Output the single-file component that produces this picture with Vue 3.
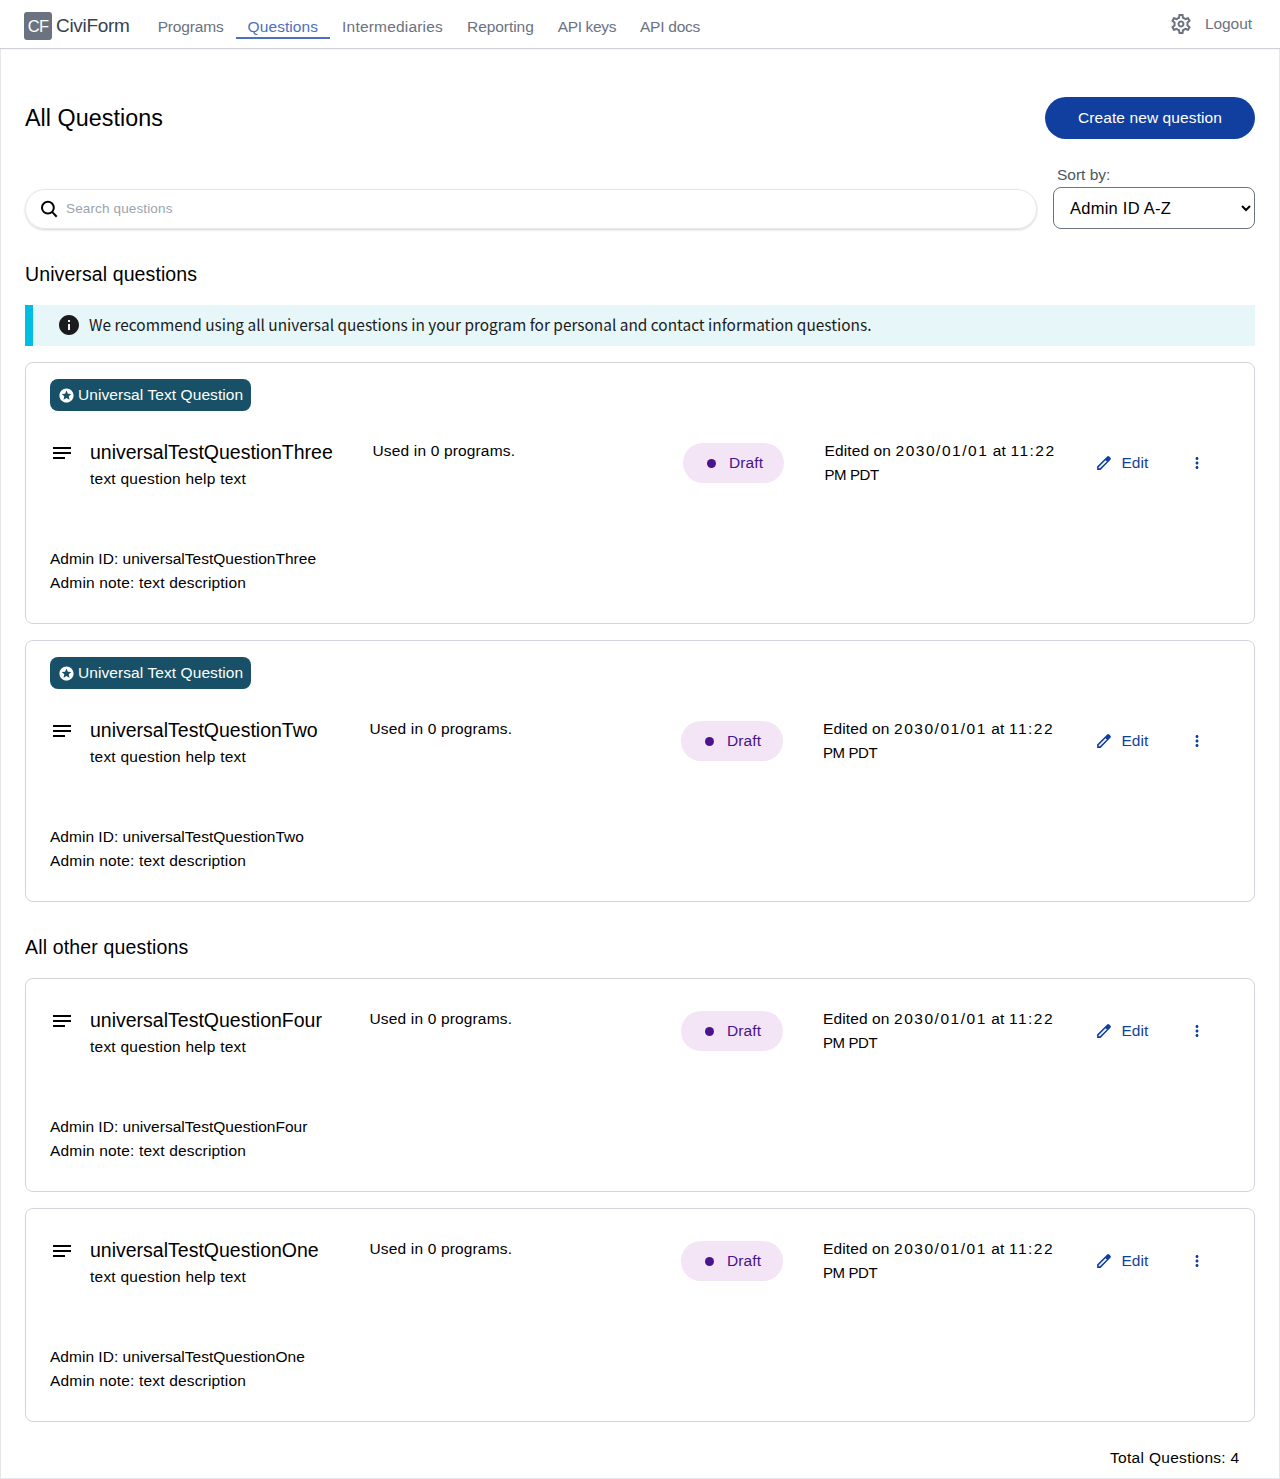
<script setup>
const nav = [
  { label: 'Programs', tracking: -0.16 },
  { label: 'Questions', tracking: 0.08, active: true },
  { label: 'Intermediaries', tracking: 0.19 },
  { label: 'Reporting', tracking: -0.05 },
  { label: 'API keys', tracking: -0.36 },
  { label: 'API docs', tracking: -0.25 },
]

const sections = [
  {
    title: 'Universal questions',
    universal: true,
    questions: [{ name: 'universalTestQuestionThree', wide: true }, { name: 'universalTestQuestionTwo' }],
  },
  {
    title: 'All other questions',
    universal: false,
    questions: [{ name: 'universalTestQuestionFour' }, { name: 'universalTestQuestionOne' }],
  },
]
</script>

<template>
  <div class="page">
    <header class="header">
      <div class="brand">
        <span class="logo">CF</span>
        <span class="brand-name">CiviForm</span>
      </div>
      <nav class="nav">
        <a
          v-for="item in nav"
          :key="item.label"
          class="nav-link"
          :class="{ active: item.active }"
        ><span :style="{ letterSpacing: item.tracking + 'px' }">{{ item.label }}</span></a>
      </nav>
      <div class="account">
        <svg width="24" height="24" viewBox="0 0 24 24" fill="currentColor">
          <path d="M19.43 12.98c.04-.32.07-.64.07-.98 0-.34-.03-.66-.07-.98l2.11-1.65c.19-.15.24-.42.12-.64l-2-3.46c-.09-.16-.26-.25-.44-.25-.06 0-.12.01-.17.03l-2.49 1c-.52-.4-1.08-.73-1.69-.98l-.38-2.65C14.46 2.18 14.25 2 14 2h-4c-.25 0-.46.18-.49.42l-.38 2.65c-.61.25-1.17.59-1.69.98l-2.49-1c-.06-.02-.12-.03-.18-.03-.17 0-.34.09-.43.25l-2 3.46c-.13.22-.07.49.12.64l2.11 1.65c-.04.32-.07.65-.07.98s.03.66.07.98l-2.11 1.65c-.19.15-.24.42-.12.64l2 3.46c.09.16.26.25.44.25.06 0 .12-.01.17-.03l2.49-1c.52.4 1.08.73 1.69.98l.38 2.65c.03.24.24.42.49.42h4c.25 0 .46-.18.49-.42l.38-2.65c.61-.25 1.17-.59 1.69-.98l2.49 1c.06.02.12.03.18.03.17 0 .34-.09.43-.25l2-3.46c.12-.22.07-.49-.12-.64l-2.11-1.65zm-1.98-1.71c.04.31.05.52.05.73 0 .21-.02.43-.05.73l-.14 1.13.89.7 1.08.84-.7 1.21-1.27-.51-1.04-.42-.9.68c-.43.32-.84.56-1.25.73l-1.06.43-.16 1.13-.2 1.35h-1.4l-.19-1.35-.16-1.13-1.06-.43c-.43-.18-.83-.41-1.23-.71l-.91-.7-1.06.43-1.27.51-.7-1.21 1.08-.84.89-.7-.14-1.13c-.03-.31-.05-.54-.05-.74s.02-.43.05-.73l.14-1.13-.89-.7-1.08-.84.7-1.21 1.27.51 1.04.42.9-.68c.43-.32.84-.56 1.25-.73l1.06-.43.16-1.13.2-1.35h1.39l.19 1.35.16 1.13 1.06.43c.43.18.83.41 1.23.71l.91.7 1.06-.43 1.27-.51.7 1.21-1.07.85-.89.7.14 1.13zM12 8.5c-1.93 0-3.5 1.57-3.5 3.5s1.57 3.5 3.5 3.5 3.5-1.57 3.5-3.5-1.57-3.5-3.5-3.5zm0 5c-.83 0-1.5-.67-1.5-1.5s.67-1.5 1.5-1.5 1.5.67 1.5 1.5-.67 1.5-1.5 1.5z" />
        </svg>
        <a class="logout">Logout</a>
      </div>
    </header>

    <main class="main">
      <div class="title-row">
        <h1>All Questions</h1>
        <button class="create">Create new question</button>
      </div>

      <div class="filters">
        <div class="search">
          <svg width="18" height="18" viewBox="0 0 18 18" fill="none" stroke="#000" stroke-width="2">
            <circle cx="7.9" cy="7.7" r="5.9" />
            <path d="M12.1 11.9l4.6 4.8" />
          </svg>
          <input type="text" placeholder="Search questions" />
        </div>
        <div class="sort">
          <label for="sort">Sort by:</label>
          <select id="sort"><option>Admin ID A-Z</option></select>
        </div>
      </div>

      <section v-for="section in sections" :key="section.title" class="section">
        <h2 :class="{ other: !section.universal }">{{ section.title }}</h2>
        <div v-if="section.universal" class="banner">
          <svg width="24" height="24" viewBox="0 0 24 24" fill="#1b1b1b">
            <path d="M12 2C6.48 2 2 6.48 2 12s4.48 10 10 10 10-4.48 10-10S17.52 2 12 2zm1 15h-2v-6h2v6zm0-8h-2V7h2v2z" />
          </svg>
          <p>We recommend using all universal questions in your program for personal and contact information questions.</p>
        </div>

        <article v-for="question in section.questions" :key="question.name" class="card">
          <div v-if="section.universal" class="tag">
            <svg width="17" height="17" viewBox="0 0 24 24" fill="#fff">
              <path d="M11.99 2C6.47 2 2 6.48 2 12s4.47 10 9.99 10C17.52 22 22 17.52 22 12S17.52 2 11.99 2zm4.24 16L12 15.45 7.77 18l1.12-4.81-3.73-3.23 4.92-.42L12 5l1.92 4.53 4.92.42-3.73 3.23L16.23 18z" />
            </svg>
            <span>Universal Text Question</span>
          </div>
          <div class="row" :class="{ wide: question.wide }">
            <svg class="kind" width="24" height="24" viewBox="0 0 24 24" fill="#000">
              <path d="M3 18h12v-2H3v2zM3 6v2h18V6H3zm0 7h18v-2H3v2z" />
            </svg>
            <div class="summary">
              <h3>{{ question.name }}</h3>
              <p>text question help text</p>
            </div>
            <p class="used">Used in 0 programs.</p>
            <div class="status">
              <span class="dot"></span>
              <span>Draft</span>
            </div>
            <p class="edited">Edited on <span class="digits">2030/01/01</span> at <span class="time">11:22</span><br /><span class="zone">PM PDT</span></p>
            <button class="edit">
              <svg width="18" height="18" viewBox="0 0 24 24" fill="currentColor" fill-rule="evenodd">
                <path d="M2.8 21.2v-4.6L16.2 3.4a2 2 0 0 1 2.8 0l1.6 1.6a2 2 0 0 1 0 2.8L7.4 21.2zM4.9 19.1h1.6l9.2-9.2-1.6-1.6-9.2 9.2z" />
              </svg>
              <span>Edit</span>
            </button>
            <button class="more" aria-label="More">
              <svg width="18" height="18" viewBox="0 0 24 24" fill="currentColor">
                <path d="M12 8c1.1 0 2-.9 2-2s-.9-2-2-2-2 .9-2 2 .9 2 2 2zm0 2c-1.1 0-2 .9-2 2s.9 2 2 2 2-.9 2-2-.9-2-2-2zm0 6c-1.1 0-2 .9-2 2s.9 2 2 2 2-.9 2-2-.9-2-2-2z" />
              </svg>
            </button>
          </div>
          <p class="admin-id">Admin ID: {{ question.name }}</p>
          <p class="admin-note">Admin note: text description</p>
        </article>
      </section>

      <p class="total">Total Questions: 4</p>
    </main>
  </div>
</template>

<style>
body {
  margin: 0;
  background: #fff;
}
</style>

<style scoped>
* {
  box-sizing: border-box;
}
.page {
  height: 1479px;
  display: flex;
  flex-direction: column;
  font-family: "Liberation Sans", Arial, sans-serif;
  font-size: 15.5px;
  line-height: 24px;
  color: #000;
}
h1, h2, h3, p {
  margin: 0;
  font-weight: 400;
}
svg {
  display: block;
  flex: none;
}
button {
  font: inherit;
  border: 0;
  padding: 0;
  background: none;
}
.header {
  position: relative;
  flex: none;
  height: 48px;
  display: flex;
  padding: 0 28px 0 24px;
  box-shadow: 0 1px 1px #cfd1d6;
  color: #6b7280;
}
.brand {
  display: flex;
  width: 121.7px;
  padding-top: 12px;
}
.logo {
  width: 28px;
  height: 28px;
  border-radius: 3px;
  background: #6b7280;
  color: #fff;
  font-size: 16.5px;
  line-height: 28px;
  letter-spacing: -0.7px;
  text-align: center;
}
.brand-name {
  margin-left: 4px;
  color: #374151;
  font-size: 19px;
  line-height: 28px;
  letter-spacing: -0.3px;
}
.nav {
  display: flex;
  padding-top: 15px;
  flex: 1;
}
.nav-link {
  height: 24px;
  padding: 0 12px;
}
.nav-link.active {
  color: #4c6fbf;
  border-bottom: 2px solid #4c6fbf;
}
.account {
  display: flex;
  gap: 12px;
  padding-top: 12px;
}
.logout {
  letter-spacing: -0.05px;
}
.main {
  flex: 1;
  padding: 48px 24px 0;
  border: 1px solid #e5e7eb;
}
.title-row {
  display: flex;
  justify-content: space-between;
  align-items: center;
}
h1 {
  font-size: 23.3px;
  letter-spacing: 0.05px;
}
.create {
  width: 210px;
  height: 42px;
  border-radius: 21px;
  background: #113f9f;
  color: #fff;
  letter-spacing: 0.1px;
}
.filters {
  display: flex;
  gap: 16px;
  align-items: flex-end;
  margin-top: 24px;
}
.search {
  flex: 1;
  height: 40px;
  display: flex;
  align-items: center;
  padding-left: 14px;
  border: 1px solid #e5e7eb;
  border-radius: 20px;
  box-shadow: 0 1px 3px rgba(0, 0, 0, 0.1), 0 1px 2px rgba(0, 0, 0, 0.08);
}
.search input {
  flex: 1;
  margin: 0 0 1px 8px;
  padding: 0;
  border: 0;
  outline: 0;
  background: none;
  font: 13.5px "Liberation Sans", Arial, sans-serif;
  letter-spacing: 0.14px;
}
.search input::placeholder {
  color: #9ca3af;
}
.sort {
  display: flex;
  flex-direction: column;
  width: 202px;
}
.sort label {
  padding-left: 4px;
  color: #4b5563;
  letter-spacing: 0;
}
.sort select {
  height: 42px;
  padding: 0 0 0 12px;
  border: 1px solid #6b7280;
  border-radius: 8px;
  background: #fff;
  color: #000;
  font: 16.5px "Liberation Sans", Arial, sans-serif;
  letter-spacing: 0.25px;
}
h2 {
  margin: 31px 0 17px;
  font-size: 19.5px;
  line-height: 28px;
  letter-spacing: 0.1px;
}
h2.other {
  letter-spacing: 0.16px;
}
.banner {
  height: 41px;
  display: flex;
  align-items: flex-start;
  padding: 8px 0 0 24px;
  border-left: 8px solid #00bde3;
  background: #e7f6f8;
  color: #1b1b1b;
  margin-bottom: 16px;
}
.banner p {
  margin: -1px 0 0 8px;
  font: 15.42px/24px "Noto Sans CJK JP", "Noto Sans CJK SC", sans-serif;
  white-space: nowrap;
}
.card {
  padding: 0 24px 28px;
  border: 1px solid #d1d5db;
  border-radius: 8px;
}
.card + .card {
  margin-top: 16px;
}
.tag {
  width: 201px;
  height: 32px;
  margin-top: 16px;
  padding-left: 7.5px;
  display: flex;
  align-items: center;
  gap: 3.5px;
  border-radius: 8px;
  background: #175067;
  color: #fff;
  letter-spacing: 0.08px;
  white-space: nowrap;
}
.row {
  display: grid;
  grid-template-columns: 40px 279.5px 311.5px 142px 272px 90px 32px;
  height: 108px;
  margin-top: 28px;
  align-items: start;
}
.row.wide {
  grid-template-columns: 40px 282.5px 310.5px 141.5px 270.5px 90px 32px;
}
.kind {
  margin-top: 2px;
}
h3 {
  margin-bottom: 2px;
  font-size: 19.5px;
  line-height: 26px;
}
.summary p {
  letter-spacing: 0.23px;
}
.used {
  letter-spacing: 0.16px;
}
.status {
  width: 101.5px;
  height: 40px;
  margin-top: 4px;
  padding-left: 23.5px;
  display: flex;
  align-items: center;
  gap: 13.5px;
  border-radius: 20px;
  background: #f3e5f5;
  color: #4a148c;
  letter-spacing: 0.1px;
}
.row.wide .status {
  width: 101px;
}
.dot {
  width: 9px;
  height: 9px;
  border-radius: 50%;
  background: #4a148c;
}
.edited {
  letter-spacing: 0.12px;
  white-space: nowrap;
}
.digits {
  letter-spacing: 1.53px;
}
.time {
  letter-spacing: 1.5px;
}
.zone {
  font-size: 15px;
  letter-spacing: -0.4px;
}
.edit,
.more {
  display: flex;
  align-items: center;
  height: 40px;
  margin-top: 4px;
  color: #113f9f;
}
.edit {
  gap: 8.5px;
}
.more {
  padding-left: 3px;
}
.admin-id {
  letter-spacing: 0.02px;
}
.admin-note {
  letter-spacing: 0.17px;
}
.total {
  margin: 24px 15.5px 0 0;
  text-align: right;
  letter-spacing: 0.3px;
}
</style>
